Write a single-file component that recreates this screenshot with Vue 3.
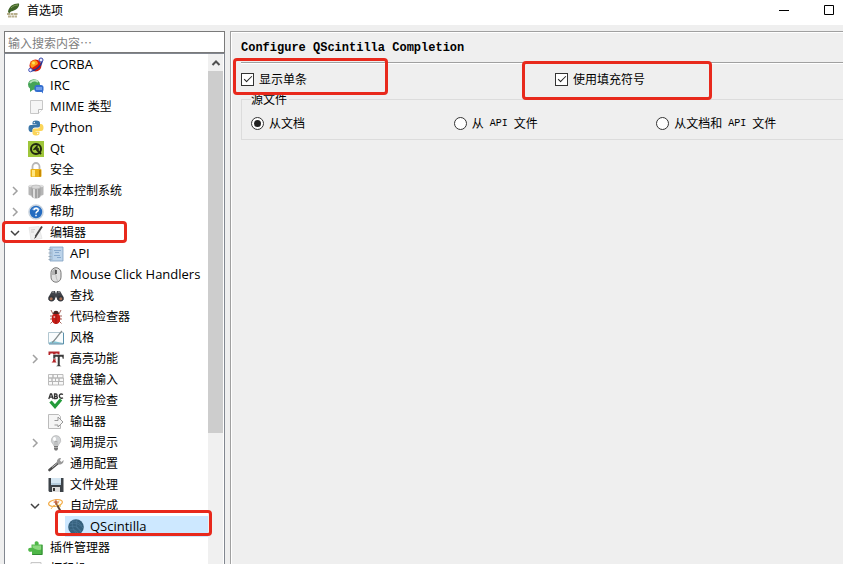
<template>
  <div class="window">
    <header class="titlebar">
      <svg class="icon" viewBox="0 0 16 16" v-html="icons.eric"></svg>
      <h1>首选项</h1>
      <button class="win-btn" aria-label="最小化">
        <svg viewBox="0 0 12 12"><path d="M1 6.5h10" /></svg>
      </button>
      <button class="win-btn" aria-label="最大化">
        <svg viewBox="0 0 12 12"><path d="M1.5 1.5h9v9h-9z" /></svg>
      </button>
    </header>

    <div class="body">
      <aside class="sidebar">
        <input v-model="keyword" class="search" type="text" placeholder="输入搜索内容…" aria-label="搜索" />
        <div class="tree-box">
          <ul class="tree">
            <li
              v-for="item in items"
              :key="item.text"
              class="row"
              :class="['level' + item.level, { marked: item.marked }]"
            >
              <button v-if="item.arrow" class="expander" :aria-label="item.text">
                <svg viewBox="0 0 10 10">
                  <path v-if="item.arrow === 'open'" class="open" d="M1 3l4 4 4-4" />
                  <path v-else d="M3 1l4 4-4 4" />
                </svg>
              </button>
              <span v-else class="expander"></span>
              <a
                href="#"
                class="entry"
                :class="{ selected: item.text === current }"
                @click.prevent="current = item.text"
              >
                <svg class="icon" viewBox="0 0 16 16" v-html="icons[item.icon]"></svg>
                <span class="text"><span
                  v-for="part in split(item.text)"
                  :key="part"
                  :class="{ latin: isLatin(part) }"
                >{{ part }}</span></span>
              </a>
            </li>
          </ul>
          <div class="scrollbar">
            <button class="scroll-up" aria-label="向上滚动">
              <svg viewBox="0 0 10 10"><path d="M1.5 7L5 3.5 8.5 7" /></svg>
            </button>
            <div class="thumb"></div>
          </div>
        </div>
      </aside>

      <main class="pane">
        <div class="page">
          <h2>Configure QScintilla Completion</h2>
          <div class="line"></div>
          <div class="checks">
            <div class="cell mark-single">
              <label><input v-model="showSingle" type="checkbox" />显示单条</label>
            </div>
            <div class="cell mark-fillups">
              <label><input v-model="useFillups" type="checkbox" />使用填充符号</label>
            </div>
          </div>
          <fieldset>
            <legend>源文件</legend>
            <div class="radios">
              <label><input v-model="source" type="radio" name="source" value="doc" />从文档</label>
              <label><input v-model="source" type="radio" name="source" value="api" />从<span class="half"> API </span>文件</label>
              <label><input v-model="source" type="radio" name="source" value="all" />从文档和<span class="half"> API </span>文件</label>
            </div>
          </fieldset>
        </div>
      </main>
    </div>
  </div>
</template>

<script setup>
import { ref } from 'vue'

const keyword = ref('')
const current = ref('QScintilla')
const showSingle = ref(true)
const useFillups = ref(true)
const source = ref('doc')

const items = [
  { text: 'CORBA', icon: 'corba', level: 0 },
  { text: 'IRC', icon: 'irc', level: 0 },
  { text: 'MIME 类型', icon: 'mime', level: 0 },
  { text: 'Python', icon: 'python', level: 0 },
  { text: 'Qt', icon: 'qt', level: 0 },
  { text: '安全', icon: 'lock', level: 0 },
  { text: '版本控制系统', icon: 'vcs', level: 0, arrow: 'closed' },
  { text: '帮助', icon: 'help', level: 0, arrow: 'closed' },
  { text: '编辑器', icon: 'editor', level: 0, arrow: 'open', marked: true },
  { text: 'API', icon: 'api', level: 1 },
  { text: 'Mouse Click Handlers', icon: 'mouse', level: 1 },
  { text: '查找', icon: 'find', level: 1 },
  { text: '代码检查器', icon: 'bug', level: 1 },
  { text: '风格', icon: 'style', level: 1 },
  { text: '高亮功能', icon: 'highlight', level: 1, arrow: 'closed' },
  { text: '键盘输入', icon: 'keyboard', level: 1 },
  { text: '拼写检查', icon: 'spell', level: 1 },
  { text: '输出器', icon: 'exporter', level: 1 },
  { text: '调用提示', icon: 'bulb', level: 1, arrow: 'closed' },
  { text: '通用配置', icon: 'wrench', level: 1 },
  { text: '文件处理', icon: 'floppy', level: 1 },
  { text: '自动完成', icon: 'wand', level: 1, arrow: 'open' },
  { text: 'QScintilla', icon: 'scintilla', level: 2, marked: true },
  { text: '插件管理器', icon: 'plugin', level: 0 },
  { text: '打印机', icon: 'printer', level: 0 }
]

// 西文和中文分开，字号不同
const split = text => text.match(/[\x20-\x7e]+|[^\x20-\x7e]+/g)
const isLatin = text => /^[\x20-\x7e]+$/.test(text)

const icons = {
  eric: `<path d="M1 12h11M2 14.500h9" stroke="#b9b08d" stroke-width="2" stroke-dasharray="3 .5"/>
    <path d="M2 9.500C3 4 8 1 13 1.500c1 3.500-3 7-8 8l-2 2z" fill="#3f6327"/><path d="M5 6c2-2 4-3 7-3" stroke="#82a05b" fill="none"/>`,
  corba: `<circle cx="7.500" cy="8.500" r="6" fill="#d81b0c"/><path d="M4 4c3-2 6 0 6 3L4 11C1.500 9 2 6 4 4z" fill="#ff9c16"/><circle cx="5.500" cy="6" r="1.500" fill="#ffe35a"/>
    <path d="M3 14C8 14 14 8 14 4" fill="none" stroke="#24348f" stroke-width="1.500"/>
    <circle cx="13" cy="3" r="2" fill="#eef" stroke="#3544a8"/><circle cx="2.500" cy="13" r="1.800" fill="#eef" stroke="#4454b8"/>`,
  irc: `<ellipse cx="6" cy="6.500" rx="6" ry="5.300" fill="#45a456"/><path d="M2 10v4l4-3z" fill="#45a456"/><path d="M2 5c2-3 6-3 8-1" stroke="#b5e3ba" stroke-width="2" fill="none"/>
    <rect x="6.500" y="7" width="9" height="7" rx="2.500" fill="#356fd0"/><path d="M12 12l3 3.500V11z" fill="#356fd0"/><path d="M9 9v3M11 9v3M13 9v3" stroke="#a9cbff"/>`,
  mime: `<path d="M2.500 1.500h12v9l-4 4h-8z" fill="#f5f5f5" stroke="#c8c8c8"/><path d="M10.500 14.500v-4h4" fill="#fff" stroke="#bbb"/>`,
  python: `<path d="M8 0.500c-3 0-3.500 1-3.500 2.500v1.500H8.500V5H3C1 5 .5 6.500.5 8.500S1.500 12 3 12h1.500V10c0-1.500 1-2.500 2.500-2.500h3c1.500 0 2-1 2-2V3c0-1.500-1-2.500-4-2.500z" fill="#3b76a8"/>
    <path d="M8 15.500c3 0 3.500-1 3.500-2.500v-1.500H7.500V11H13c2 0 2.500-1.500 2.500-3.500S14.500 4 13 4h-1v2c0 1.500-1 2.500-2.500 2.500h-3c-1.500 0-2 1-2 2V13c0 1.500 1 2.500 3.500 2.500z" fill="#fbd55a"/>
    <circle cx="6.300" cy="2.500" r=".7" fill="#fff"/><circle cx="9.700" cy="13.500" r=".7" fill="#fff"/>`,
  qt: `<path d="M0 0h16v16H0z" fill="#9fc63b"/><circle cx="8" cy="8" r="5" fill="none" stroke="#20280f" stroke-width="2"/><path d="M9 9l4 4" stroke="#20280f" stroke-width="2"/><path d="M5.500 9L9 5v5M6 8h5" stroke="#20280f" fill="none" stroke-width="1.300"/>`,
  lock: `<path d="M4.500 8V4.500a3.500 3.500 0 0 1 7 0V8" fill="none" stroke="#b7b7b7" stroke-width="1.800"/><rect x="2.500" y="7" width="11" height="8" rx="1" fill="#eab218"/><path d="M4 8h3v6.500H4z" fill="#ffe681"/><path d="M11 8h2v6.500h-2z" fill="#c98b05"/>`,
  vcs: `<path d="M.5 3v8.500c1 1.500 4 1.500 5 0V3zM10.500 3v8.500c1 1.500 4 1.500 5 0V3z" fill="#b5b5b5"/><ellipse cx="3" cy="3" rx="2.500" ry="1.300" fill="#ddd"/><ellipse cx="13" cy="3" rx="2.500" ry="1.300" fill="#ddd"/>
    <path d="M3.500 4v9.500c1 2.500 8 2.500 9 0V4z" fill="#a2a2a2"/><path d="M5 5v9.500l2 .8V5z" fill="#dedede"/><path d="M9.500 5v10" stroke="#c4c4c4"/><ellipse cx="8" cy="4" rx="4.500" ry="2" fill="#d8d8d8" stroke="#aaa" stroke-width=".6"/>`,
  help: `<circle cx="8" cy="8" r="7" fill="#236bc0" stroke="#c9d3de" stroke-width="1.600"/><path d="M3.500 6C5 2 11 2 12.500 6z" fill="#619bdc"/><path d="M6 6.300c0-3 4.500-2.500 4.200 0C10 8 8 7.500 8 9.500M8 10.700v1.600" fill="none" stroke="#fff" stroke-width="1.500"/>`,
  editor: `<path d="M1 2.500l10-1 3 12-11 1.500z" fill="#f0f0f0" stroke="#ddd" stroke-width=".6"/><path d="M3 5l4-.5M3 7h3" stroke="#ccc"/><path d="M14 1.500L7.500 11.500" stroke="#454545" stroke-width="1.800"/><path d="M7.500 11l-1.500 3 2.500-2z" fill="#222"/>`,
  api: `<path d="M2 1h13v14H2z" fill="#bdd4ea" stroke="#7f9fc0" stroke-width=".8"/><path d="M4 2v12" stroke="#9db7d1"/><path d="M.5 3.500h3M.5 7h3M.5 10.500h3M.5 13.500h3" stroke="#9aabb9"/><path d="M6 4.500h7M7 6.500h4M6 9.500h6M9 11.500h4" stroke="#7ba0c6" stroke-width=".8"/>`,
  mouse: `<rect x="3" y=".7" width="10" height="14.500" rx="5" fill="#e1e1e1" stroke="#777"/><path d="M8 1.500v6.500H3.500C3.500 4 5 2 8 1.500z" fill="#b5b5b5"/><path d="M8 8c0 3 1 5 2 6.500" stroke="#bbb" fill="none"/><path d="M8 3v4" stroke="#333" stroke-width="1.500"/>`,
  find: `<path d="M4 3h3l1 3 1-3h3l3.500 6v3H9.500L8 8.500 6.500 12H.5V9z" fill="#41444a"/><circle cx="3.500" cy="10.500" r="3" fill="#34373d"/><circle cx="12.500" cy="10.500" r="3" fill="#34373d"/><circle cx="3.200" cy="10.700" r="1.500" fill="#a66d52"/><circle cx="12.800" cy="10.700" r="1.500" fill="#a66d52"/><path d="M4 4h2M10 4h2" stroke="#aaa"/>`,
  bug: `<path d="M3 1l2 4M13 1l-2 4M2 7h3M14 7h-3M2.500 14.500l3-3M13.500 14.500l-3-3M2 10h12" stroke="#a5655c"/><ellipse cx="8" cy="9.500" rx="4.300" ry="5.500" fill="#c81b16"/><path d="M5 5c0-4.500 6-4.500 6 0z" fill="#46211e"/><path d="M8 5v10" stroke="#8c1512" stroke-width=".8"/><circle cx="6.300" cy="8" r="1" fill="#fff" opacity=".6"/>`,
  style: `<path d="M.5 2.500h15v11H.5z" fill="#f9fcfd" stroke="#b2c7d1"/><path d="M1 12.500l4-1.500 10 2H1z" fill="#86c6d6"/><path d="M15.500 3v11H1" stroke="#5a91ac" fill="none"/><path d="M4 12.500C7 11 10 5 14 1" stroke="#858d8e" stroke-width="1.300" fill="none"/>`,
  highlight: `<path d="M.5.5h11V4H10l-.5-1.500H7.500V10l1 1.500h-5l1.500-1.500V2.500H2.500L2 4H.5z" fill="#b52529"/><path d="M5 3.500h11V8h-1.500L14 6H12v8l1.500 1.500H8L9.500 14V6h-2L7 8H5z" fill="#3b3b3b" stroke="#fff" stroke-width=".5"/>`,
  keyboard: `<path d="M.5 2.500h4.500v3.500H.5zM5 2.500h4.500v3.500H5zM9.500 2.500h5.500v3.500H9.500zM.5 6h3.500v3.500H.5zM4 6h3.500v3.500H4zM7.500 6H11v3.500H7.500zM11 6h4.500v3.500H11zM.5 9.500h4V13h-4zM4.500 9.500h6V13h-6zM10.500 9.500h5V13h-5z" fill="#f8f8f8" stroke="#b5b5b5" stroke-width=".9"/>`,
  spell: `<path d="M.8 6L2.500 1h1L5.200 6M1.700 4.200h2.500M6.500 1v4.500h1.700c1.800 0 1.500-2 0-2.200H6.500h1.700c1.300-.3 1-2.300-.2-2.300zM15 1.500c-3-1.500-4.500 1-3 3 1 1 2 1 3 .3" fill="none" stroke="#333" stroke-width="1.300"/><path d="M2.500 8.500L7 13.500l6-7" stroke="#239b3a" stroke-width="3.200" fill="none"/>`,
  exporter: `<path d="M.5.500h10l2 2v12H.5z" fill="#f5f5f5" stroke="#bbb"/><path d="M6.500 6.500H10V3l5 5-5 5v-2H6.500" fill="#f5f5f5" stroke="#999"/>`,
  bulb: `<path d="M8 .5a4.800 4.800 0 0 0-3 8.500l1 2h4l1-2A4.800 4.800 0 0 0 8 .5z" fill="#d0d3d5" stroke="#b0b0b0" stroke-width=".6"/><ellipse cx="6.500" cy="4" rx="1.500" ry="2" fill="#fff"/><path d="M7 10V6l1 1 1-1v4" fill="none" stroke="#999" stroke-width=".6"/><path d="M6 11h4v3l-1 1.500H7L6 14z" fill="#777"/><path d="M6 12.500h4" stroke="#ccc" stroke-width=".7"/>`,
  wrench: `<path d="M1.500 14L10 7" stroke="#4d4d4d" stroke-width="2.600" stroke-linecap="round"/><path d="M4 11.500l5-4" stroke="#bbb"/><path d="M9 7c-.5-3 1-5 4-5l-1 2.500 1.500 1.500L15.500 4c.5 3-2 5-5 4.500z" fill="#999"/>`,
  floppy: `<path d="M.5 1h15v14h-14l-1-1z" fill="#3c4248"/><path d="M3 1h10v7H3z" fill="#d5e6f2"/><path d="M3 7h10" stroke="#93b2c8"/><path d="M4 10h8v5H4z" fill="#ddd"/><path d="M5 11h2v3H5z" fill="#333"/>`,
  wand: `<ellipse cx="7.500" cy="5" rx="7" ry="3.300" fill="none" stroke="#f3ac48" stroke-width="1.200" transform="rotate(-10 7.500 5)"/><path d="M8 5l5 9" stroke="#5e4438" stroke-width="2"/><path d="M3 11l3-4 2 2 3-6" stroke="#f0ba60" fill="none"/><path d="M8 1l.8 2.200L11 4 8.800 5 8 7.500 7 5 5 4l2-.8z" fill="#c96a46"/><circle cx="12" cy="8" r="1" fill="#f1c550"/>`,
  scintilla: `<circle cx="8" cy="8" r="7.800" fill="#35607c"/><path d="M2 5c5-2 9 0 13 4M1 8c5-2 9 0 12 4M2 11c4-1 6 0 8 3M5 2c4 0 7 2 9 5M5 1c-2 5 0 10 4 14M9 1c-2 5 0 9 4 12" stroke="#5683a2" stroke-width=".5" fill="none"/>`,
  plugin: `<path d="M3.500 4.500H7C5 0 12 0 10.500 4.500h4V15H4v-3.500C-1 13 -1 6.500 3.500 8z" fill="#4fb748"/><path d="M4.500 5.500h9v4c-3 1-6 0-9-2z" fill="#8cd97f"/><path d="M14 5v9.500H4.500" fill="none" stroke="#318b32"/>`,
  printer: `<path d="M3 1.500h10V7H3z" fill="#f6f6f6" stroke="#c8c8c8"/><path d="M.5 7h15v7H.5z" fill="#bbb"/>`
}
</script>

<style>
body {
  margin: 0;
}
</style>

<style scoped>
.window {
  display: flex;
  flex-direction: column;
  height: 100vh;
  overflow: hidden;
  background: #efefef;
  color: #000;
  font-family: 'Open Sans', 'Noto Sans CJK SC', sans-serif;
  font-size: 12px;
}

button {
  padding: 0;
  border: none;
  background: none;
}

path {
  fill: none;
  stroke: currentColor;
}

.icon {
  flex: none;
  width: 16px;
  height: 16px;
}

/* 标题栏 */
.titlebar {
  display: flex;
  flex: none;
  align-items: center;
  height: 25px;
  padding-left: 6px;
  padding-bottom: 6px;
  box-sizing: border-box;
  background: #fff;
}

.titlebar h1 {
  flex: 1;
  margin: 0 0 0 5px;
  font-size: 12px;
  font-weight: normal;
}

.win-btn {
  width: 45px;
  height: 18px;
}

.win-btn:last-child {
  margin-right: -8px;
}

.win-btn svg {
  display: block;
  width: 12px;
  height: 12px;
  margin: auto;
}

.body {
  display: flex;
  flex: 1;
  gap: 5px;
  min-height: 0;
  padding: 6px 0 0 4px;
}

/* 左侧树 */
.sidebar {
  display: flex;
  flex: none;
  flex-direction: column;
  width: 221px;
}

.search {
  flex: none;
  height: 22px;
  padding: 0 3px;
  box-sizing: border-box;
  border: 1px solid #7a7a7a;
  background: #fff;
  font-family: 'Noto Sans CJK SC', sans-serif;
  font-size: 12px;
  outline: none;
}

.search::placeholder {
  color: #808080;
}

.tree-box {
  display: flex;
  flex: 1;
  min-height: 0;
  border: 1px solid #828790;
  border-bottom: none;
  background: #fff;
}

.tree {
  flex: 1;
  margin: 0;
  padding: 0;
  list-style: none;
}

.row {
  display: flex;
  position: relative;
  height: 21px;
}

.level1 {
  padding-left: 20px;
}

.level2 {
  padding-left: 40px;
}

.expander {
  display: flex;
  flex: none;
  align-items: center;
  justify-content: center;
  width: 20px;
  color: #a0a0a0;
}

.expander svg {
  width: 10px;
  height: 10px;
}

.expander path {
  stroke-width: 1.5;
}

.expander .open {
  stroke: #404040;
}

.entry {
  display: flex;
  flex: 1;
  align-items: center;
  gap: 6px;
  padding-left: 3px;
  color: inherit;
  line-height: 21px;
  text-decoration: none;
}

.text {
  white-space: pre;
}

.latin {
  font-size: 13px;
}

.selected {
  background: #cde8ff;
}

.scrollbar {
  display: flex;
  flex-direction: column;
  width: 15px;
  margin-right: 1px;
  background: #f0f0f0;
}

.scroll-up {
  height: 17px;
  color: #505050;
}

.scroll-up svg {
  display: block;
  width: 10px;
  height: 10px;
  margin: auto;
}

.scroll-up path {
  stroke-width: 2;
}

.thumb {
  height: 71%;
  background: #cdcdcd;
}

/* 红色标注框 */
.marked::after,
.cell::after {
  position: absolute;
  border: 3px solid #e8291c;
  border-radius: 4px;
  box-sizing: border-box;
  content: '';
  pointer-events: none;
}

.level0.marked::after {
  top: -1px;
  left: -3px;
  width: 125px;
  height: 22px;
}

.level2.marked::after {
  top: -6px;
  right: -4px;
  left: 50px;
  height: 26px;
}

/* 右侧页面 */
.pane {
  flex: 1;
  min-width: 0;
  border-top: 1px solid #a0a0a0;
  border-left: 1px solid #a0a0a0;
  box-shadow: inset 1px 1px #fff;
  font-family: 'Liberation Mono', 'Noto Sans CJK SC', monospace;
}

.page {
  margin-right: -20px;
  padding: 8px 0 0 10px;
}

.page h2 {
  margin: 0;
  font-size: 12px;
  line-height: 16px;
  white-space: nowrap;
}

.line {
  margin-top: 6px;
  border-top: 1px solid #a0a0a0;
  border-bottom: 1px solid #fff;
}

.checks {
  display: grid;
  grid-template-columns: 1fr 1fr;
  gap: 6px;
  padding: 7px 0 4px;
}

.cell {
  position: relative;
}

.cell::after {
  z-index: 1;
}

.mark-single::after {
  top: -13px;
  left: -8px;
  width: 155px;
  height: 37px;
}

.mark-fillups::after {
  top: -10px;
  left: -33px;
  width: 190px;
  height: 39px;
}

label {
  display: flex;
  align-items: center;
  height: 16px;
  white-space: nowrap;
}

.half {
  font-size: 10px;
  white-space: pre;
}

input[type='checkbox'],
input[type='radio'] {
  display: grid;
  place-items: center;
  width: 13px;
  height: 13px;
  margin: 0 5px 0 0;
  box-sizing: border-box;
  border: 1px solid #333;
  background: #fff;
  appearance: none;
}

input[type='checkbox']:checked::after {
  width: 8px;
  height: 4px;
  margin-bottom: 3px;
  border-bottom: 1px solid #222;
  border-left: 1px solid #222;
  box-sizing: border-box;
  content: '';
  transform: rotate(-45deg);
}

input[type='radio'] {
  border-radius: 50%;
}

input[type='radio']:checked::after {
  width: 7px;
  height: 7px;
  border-radius: 50%;
  background: #222;
  content: '';
}

fieldset {
  margin: 0;
  padding: 8px 9px;
  border: 1px solid #dcdcdc;
}

legend {
  padding: 4px 2px 0 0;
  line-height: 12px;
}

.radios {
  display: grid;
  grid-template-columns: repeat(3, 1fr);
  gap: 6px;
}
</style>
